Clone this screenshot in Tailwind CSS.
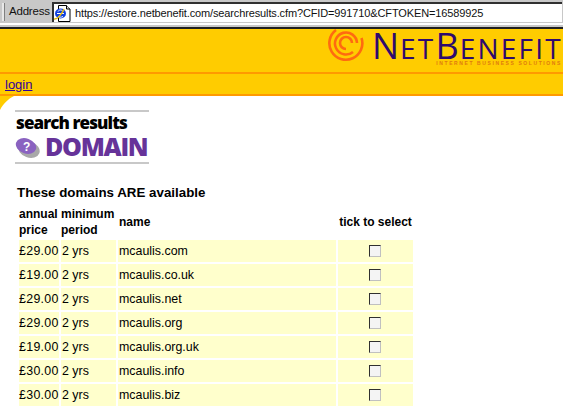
<!DOCTYPE html>
<html lang="en">
<head>
  <meta charset="UTF-8" />
  <title>search results</title>
  <script src="https://cdn.jsdelivr.net/npm/@tailwindcss/browser@4"></script>
</head>
<body class="bg-white text-black font-['Liberation_Sans',Arial,sans-serif] overflow-hidden h-[407px] w-[563px]">
  <!-- Address bar -->
  <div class="h-[29px] bg-[#c8c8c8] border-b-2 border-[#202020] flex flex-col">
    <div class="h-[20px] mt-[2px] flex items-center">
      <div class="w-[3px] h-[18px] ml-[2px] bg-[#e8e8e8] border-r border-[#808080]"></div>
      <span class="ml-[4px] w-[43px] text-[11.500px] leading-none text-[#111] tracking-[-0.200px]">Address</span>
      <div class="flex-1 h-[20px] mr-px bg-white border-t-2 border-l-2 border-[#303030] flex items-center">
        <svg class="w-[17px] h-[17px] shrink-0" viewBox="0 0 17 17">
          <path d="M4.500.5h8l3.500 3.500v12.500H4.500z" fill="#fff" stroke="#000" />
          <path d="M12.500.5v3.500H16" fill="#ddd" stroke="#000" />
          <ellipse cx="6.500" cy="8.500" rx="5.500" ry="5" fill="#1040e0" />
          <path d="M3 8.500h7M4 6.500c1-2 4-2 5 0M4 11c1 1.500 3 1.500 5 .5" stroke="#fff" fill="none" />
          <path d="M0 14c3 1 8-5 10-10" stroke="#e0b818" stroke-width="1.500" fill="none" />
        </svg>
        <span class="ml-[4px] text-[11px] leading-none text-[#111] whitespace-nowrap tracking-[-0.130px]">https://estore.netbenefit.com/searchresults.cfm?CFID=991710&amp;CFTOKEN=16589925</span>
      </div>
    </div>
    <div class="mt-[1px] h-[2px] bg-white"></div>
  </div>

  <!-- Banner -->
  <header class="h-[43px] bg-[#ffcc00] flex items-start justify-end">
    <svg class="w-[38px] h-[35px] mr-[6px] shrink-0" viewBox="0 0 38 35" fill="none" stroke="#ff6a10" stroke-width="2.600">
      <path d="M33.500 9A16.500 16.500 0 1 1 8 1" />
      <path d="M25 23A11 11 0 1 1 29 14" />
      <path d="M24 14A6 6 0 1 0 18 20" />
    </svg>
    <div class="w-[191px] h-[43px] shrink-0 flex flex-col items-start text-[#2e0a6e]">
      <div class="h-[30px] mt-[2px] flex items-baseline whitespace-nowrap font-['Open_Sans',sans-serif] leading-[30px]">
        <span class="text-[36px] tracking-[1px]">N</span><span class="text-[28px] tracking-[2.200px]">ET</span><span class="text-[36px] tracking-[1px]">B</span><span class="text-[28px] tracking-[2.200px]">ENEFIT</span>
      </div>
      <div class="self-end mt-[-1px] mr-[1px] text-[5px] leading-[6px] tracking-[1.600px] text-[#e07a10] whitespace-nowrap font-bold">INTERNET BUSINESS SOLUTIONS</div>
    </div>
  </header>

  <!-- Login strip -->
  <nav class="h-[24px] bg-[#ffcc00] border-y-2 border-[#ff9a00] pl-[5px] flex items-center">
    <a href="#" class="text-[13px] text-[#330099] underline leading-none">login</a>
  </nav>

  <main class="relative">
    <!-- Corner curve -->
    <svg class="absolute left-0 top-0 w-[14px] h-[14px]" viewBox="0 0 14 14"><path d="M0 0h14C8 3 3 8 0 14z" fill="#ffcc00" /></svg>

    <!-- Section heading image -->
    <div class="ml-[15px] pt-[14px] w-[134px]">
      <div class="h-[54px] border-y-2 border-[#c8c8c8] flex flex-col">
        <div class="h-[21px] pl-px text-[17px] leading-[21px] font-extrabold tracking-[-0.900px] whitespace-nowrap font-['Open_Sans',sans-serif]">search results</div>
        <div class="flex items-center h-[27px]">
          <svg class="w-[26px] h-[24px] shrink-0" viewBox="0 0 26 24">
            <ellipse cx="14" cy="14.500" rx="11" ry="8" fill="#a8a8a8" transform="rotate(20 14 14.500)" />
            <ellipse cx="11" cy="11" rx="10.500" ry="7.500" fill="#8a62c0" transform="rotate(20 11 11)" />
            <text x="8" y="15.500" font-size="12" font-weight="700" fill="#fff" font-family="Liberation Sans">?</text>
          </svg>
          <span class="ml-[4px] text-[25px] leading-none font-extrabold tracking-[-1.300px] text-[#663399] font-['Open_Sans',sans-serif]">DOMAIN</span>
        </div>
      </div>
    </div>

    <h2 class="ml-[17px] mt-[21px] text-[13.330px] leading-[16px] font-bold">These domains ARE available</h2>

    <!-- Results -->
    <table class="ml-[17px] mt-[2px] border-separate border-spacing-[2px] text-[12.400px] leading-[16px] table-fixed w-[398px]">
      <thead>
        <tr class="h-[33px] text-[12px] text-left">
          <th class="w-[40px] font-bold align-bottom whitespace-nowrap">annual<br />price</th>
          <th class="w-[55px] font-bold align-bottom whitespace-nowrap">minimum<br />period</th>
          <th class="w-[218px] pl-px font-bold">name</th>
          <th class="w-[75px] font-bold text-center whitespace-nowrap">tick to select</th>
        </tr>
      </thead>
      <tbody>
        <tr class="h-[22px] bg-[#ffffcc]"><td class="tracking-[0.300px]">£29.00</td><td class="pl-px">2 yrs</td><td class="pl-px">mcaulis.com</td><td><div class="ml-[31px] w-[12px] h-[12px] bg-[#f4f4f4] border border-[#303030] border-r-[#c0c0c0] border-b-[#c0c0c0]"></div></td></tr>
        <tr class="h-[22px] bg-[#ffffcc]"><td class="tracking-[0.300px]">£19.00</td><td class="pl-px">2 yrs</td><td class="pl-px">mcaulis.co.uk</td><td><div class="ml-[31px] w-[12px] h-[12px] bg-[#f4f4f4] border border-[#303030] border-r-[#c0c0c0] border-b-[#c0c0c0]"></div></td></tr>
        <tr class="h-[22px] bg-[#ffffcc]"><td class="tracking-[0.300px]">£29.00</td><td class="pl-px">2 yrs</td><td class="pl-px">mcaulis.net</td><td><div class="ml-[31px] w-[12px] h-[12px] bg-[#f4f4f4] border border-[#303030] border-r-[#c0c0c0] border-b-[#c0c0c0]"></div></td></tr>
        <tr class="h-[22px] bg-[#ffffcc]"><td class="tracking-[0.300px]">£29.00</td><td class="pl-px">2 yrs</td><td class="pl-px">mcaulis.org</td><td><div class="ml-[31px] w-[12px] h-[12px] bg-[#f4f4f4] border border-[#303030] border-r-[#c0c0c0] border-b-[#c0c0c0]"></div></td></tr>
        <tr class="h-[22px] bg-[#ffffcc]"><td class="tracking-[0.300px]">£19.00</td><td class="pl-px">2 yrs</td><td class="pl-px">mcaulis.org.uk</td><td><div class="ml-[31px] w-[12px] h-[12px] bg-[#f4f4f4] border border-[#303030] border-r-[#c0c0c0] border-b-[#c0c0c0]"></div></td></tr>
        <tr class="h-[22px] bg-[#ffffcc]"><td class="tracking-[0.300px]">£30.00</td><td class="pl-px">2 yrs</td><td class="pl-px">mcaulis.info</td><td><div class="ml-[31px] w-[12px] h-[12px] bg-[#f4f4f4] border border-[#303030] border-r-[#c0c0c0] border-b-[#c0c0c0]"></div></td></tr>
        <tr class="h-[22px] bg-[#ffffcc]"><td class="tracking-[0.300px]">£30.00</td><td class="pl-px">2 yrs</td><td class="pl-px">mcaulis.biz</td><td><div class="ml-[31px] w-[12px] h-[12px] bg-[#f4f4f4] border border-[#303030] border-r-[#c0c0c0] border-b-[#c0c0c0]"></div></td></tr>
      </tbody>
    </table>
  </main>
</body>
</html>
